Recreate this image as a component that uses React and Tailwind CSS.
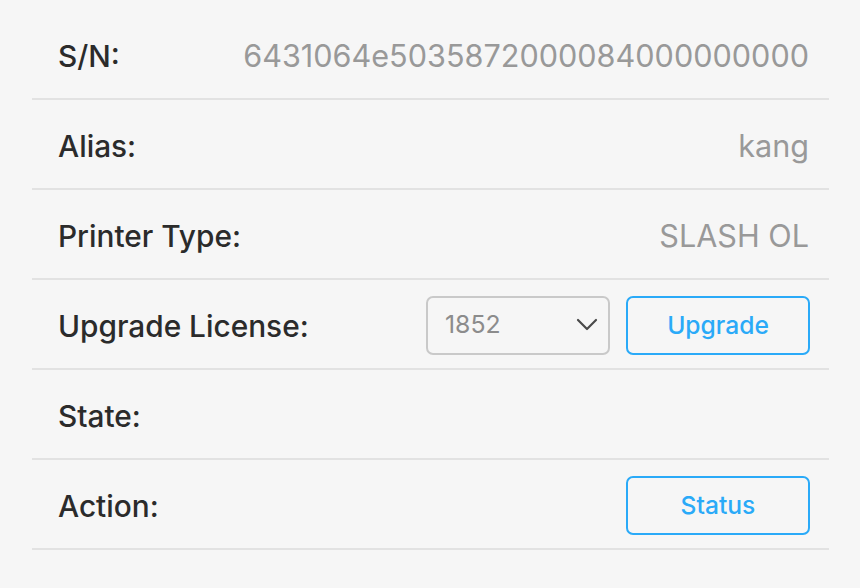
import React from "react";

const font = { fontFamily: "Inter, 'Noto Sans', sans-serif" };

function Row({ label, children }) {
  return (
    <div className="flex items-center justify-between h-[90px] border-b-2 border-[#e2e2e2] pl-[26px] pr-[20px]">
      <span className="text-[29.8px] font-medium text-[#2b2b2b] leading-none mt-[6px]">{label}</span>
      <div className="flex items-center">{children}</div>
    </div>
  );
}

function Value({ children }) {
  return <span className="text-[30.6px] text-[#999999] leading-none mt-[5px]">{children}</span>;
}

function OutlineButton({ children }) {
  return (
    <button className="w-[184px] h-[59px] rounded-[7px] border-2 border-[#2aaaf8] text-[#2aaaf8] text-[24.6px] font-medium bg-transparent flex items-center justify-center">
      {children}
    </button>
  );
}

export default function App() {
  return (
    <div className="w-[860px] h-[588px] bg-[#f6f6f6] pt-[10px]" style={font}>
      <div className="ml-[32px] w-[797px]">
        <Row label="S/N:">
          <Value>6431064e5035872000084000000000</Value>
        </Row>
        <Row label="Alias:">
          <Value>kang</Value>
        </Row>
        <Row label="Printer Type:">
          <Value>SLASH OL</Value>
        </Row>
        <Row label="Upgrade License:">
          <div className="flex items-center gap-[16px] mr-[-1px] mt-[2px]">
            <div className="w-[184px] h-[59px] rounded-[7px] border-2 border-[#c9c9c9] flex items-center justify-between pl-[17px] pr-[10px]">
              <span className="text-[24.8px] text-[#8c8c8c]">1852</span>
              <svg width="22" height="14" viewBox="0 0 22 14" fill="none">
                <path d="M2 2 L11 11 L20 2" stroke="#4a4a4a" strokeWidth="2.2" strokeLinecap="round" strokeLinejoin="round" />
              </svg>
            </div>
            <OutlineButton>Upgrade</OutlineButton>
          </div>
        </Row>
        <Row label="State:" />
        <Row label="Action:">
          <div className="mr-[-1px] mt-[2px]">
            <OutlineButton>Status</OutlineButton>
          </div>
        </Row>
      </div>
    </div>
  );
}
